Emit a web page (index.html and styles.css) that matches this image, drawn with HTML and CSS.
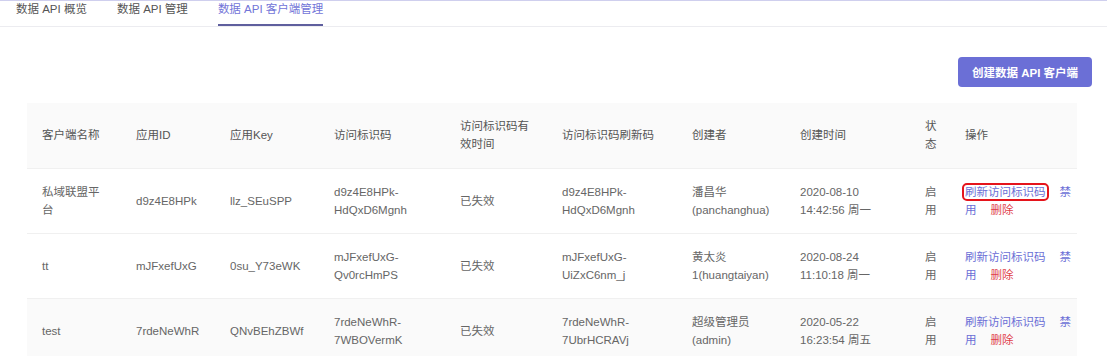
FILE: index.html
```html
<!DOCTYPE html>
<html>
<head>
    <title>数据 API 客户端管理</title>
    <link rel="stylesheet" href="styles.css">
</head>
<body>
    <nav class="tabs">
        <a class="tab">数据 API 概览</a>
        <a class="tab">数据 API 管理</a>
        <a class="tab active">数据 API 客户端管理</a>
    </nav>

    <div class="toolbar">
        <button class="btn-primary">创建数据 API 客户端</button>
    </div>

    <table class="client-table">
        <colgroup>
            <col style="width:94px"><col style="width:94px"><col style="width:104px">
            <col style="width:126px"><col style="width:102px"><col style="width:130px">
            <col style="width:108px"><col style="width:125px"><col style="width:40px">
            <col style="width:127px">
        </colgroup>
        <thead>
            <tr>
                <th>客户端名称</th><th>应用ID</th><th>应用Key</th><th>访问标识码</th>
                <th>访问标识码有效时间</th><th>访问标识码刷新码</th><th>创建者</th>
                <th>创建时间</th><th>状态</th><th class="ops">操作</th>
            </tr>
        </thead>
        <tbody>
            <tr>
                <td>私域联盟平台</td><td>d9z4E8HPk</td><td>llz_SEuSPP</td>
                <td>d9z4E8HPk-<br>HdQxD6Mgnh</td><td>已失效</td>
                <td>d9z4E8HPk-<br>HdQxD6Mgnh</td><td>潘昌华<br>(panchanghua)</td>
                <td>2020-08-10<br>14:42:56 周一</td><td>启用</td>
                <td class="ops"><a class="link marked">刷新访问标识码</a><a class="link"><span>禁</span><span>用</span></a><a class="link danger">删除</a></td>
            </tr>
            <tr>
                <td>tt</td><td>mJFxefUxG</td><td>0su_Y73eWK</td>
                <td>mJFxefUxG-<br>Qv0rcHmPS</td><td>已失效</td>
                <td>mJFxefUxG-<br>UiZxC6nm_j</td><td>黄太炎<br>1(huangtaiyan)</td>
                <td>2020-08-24<br>11:10:18 周一</td><td>启用</td>
                <td class="ops"><a class="link">刷新访问标识码</a><a class="link"><span>禁</span><span>用</span></a><a class="link danger">删除</a></td>
            </tr>
            <tr class="hover">
                <td>test</td><td>7rdeNeWhR</td><td>QNvBEhZBWf</td>
                <td>7rdeNeWhR-<br>7WBOVermK</td><td>已失效</td>
                <td>7rdeNeWhR-<br>7UbrHCRAVj</td><td>超级管理员<br>(admin)</td>
                <td>2020-05-22<br>16:23:54 周五</td><td>启用</td>
                <td class="ops"><a class="link">刷新访问标识码</a><a class="link"><span>禁</span><span>用</span></a><a class="link danger">删除</a></td>
            </tr>
        </tbody>
    </table>
</body>
</html>
```

FILE: styles.css
```css
body {
    margin: 0;
    font-family: "Liberation Sans", "Noto Sans CJK SC", sans-serif;
    font-size: 11.5px;
    color: #666;
    background-color: #fff;
}

.tabs {
    display: flex;
    padding-left: 16px;
    border-top: 1px solid #cfcfee;
    border-bottom: 1px solid #ececf0;
}
.tab {
    margin-right: 30px;
    height: 23px;
    line-height: 16px;
    color: #555;
    border-bottom: 2px solid transparent;
}
.tab.active {
    color: #7275d8;
    border-bottom-color: #5f5f9e;
}

.toolbar {
    display: flex;
    justify-content: flex-end;
    padding: 30px 15px 0 0;
}
.btn-primary {
    width: 134px;
    height: 30px;
    border: none;
    border-radius: 4px;
    background-color: #6b6fd6;
    color: #fff;
    font-family: inherit;
    font-size: 11.5px;
    font-weight: bold;
}

.client-table {
    margin: 16px 0 0 27px;
    width: 1050px;
    table-layout: fixed;
    border-collapse: collapse;
}
.client-table th,
.client-table td {
    height: 65px;
    padding: 0 15px;
    text-align: left;
    line-height: 18px;
    font-weight: normal;
    border-bottom: 1px solid #f0f0f0;
    box-sizing: border-box;
}
.client-table th {
    background-color: #fafafa;
    color: #555;
}
.client-table .ops {
    padding-right: 0;
}
.client-table tr.hover td {
    background-color: #fafafa;
}

.link {
    color: #6b6fd6;
    margin-right: 14px;
    cursor: pointer;
}
.link.danger {
    color: #e0404a;
}
.link.marked {
    outline: 2px solid #e5141c;
    outline-offset: 1px;
    border-radius: 2px;
}
```
